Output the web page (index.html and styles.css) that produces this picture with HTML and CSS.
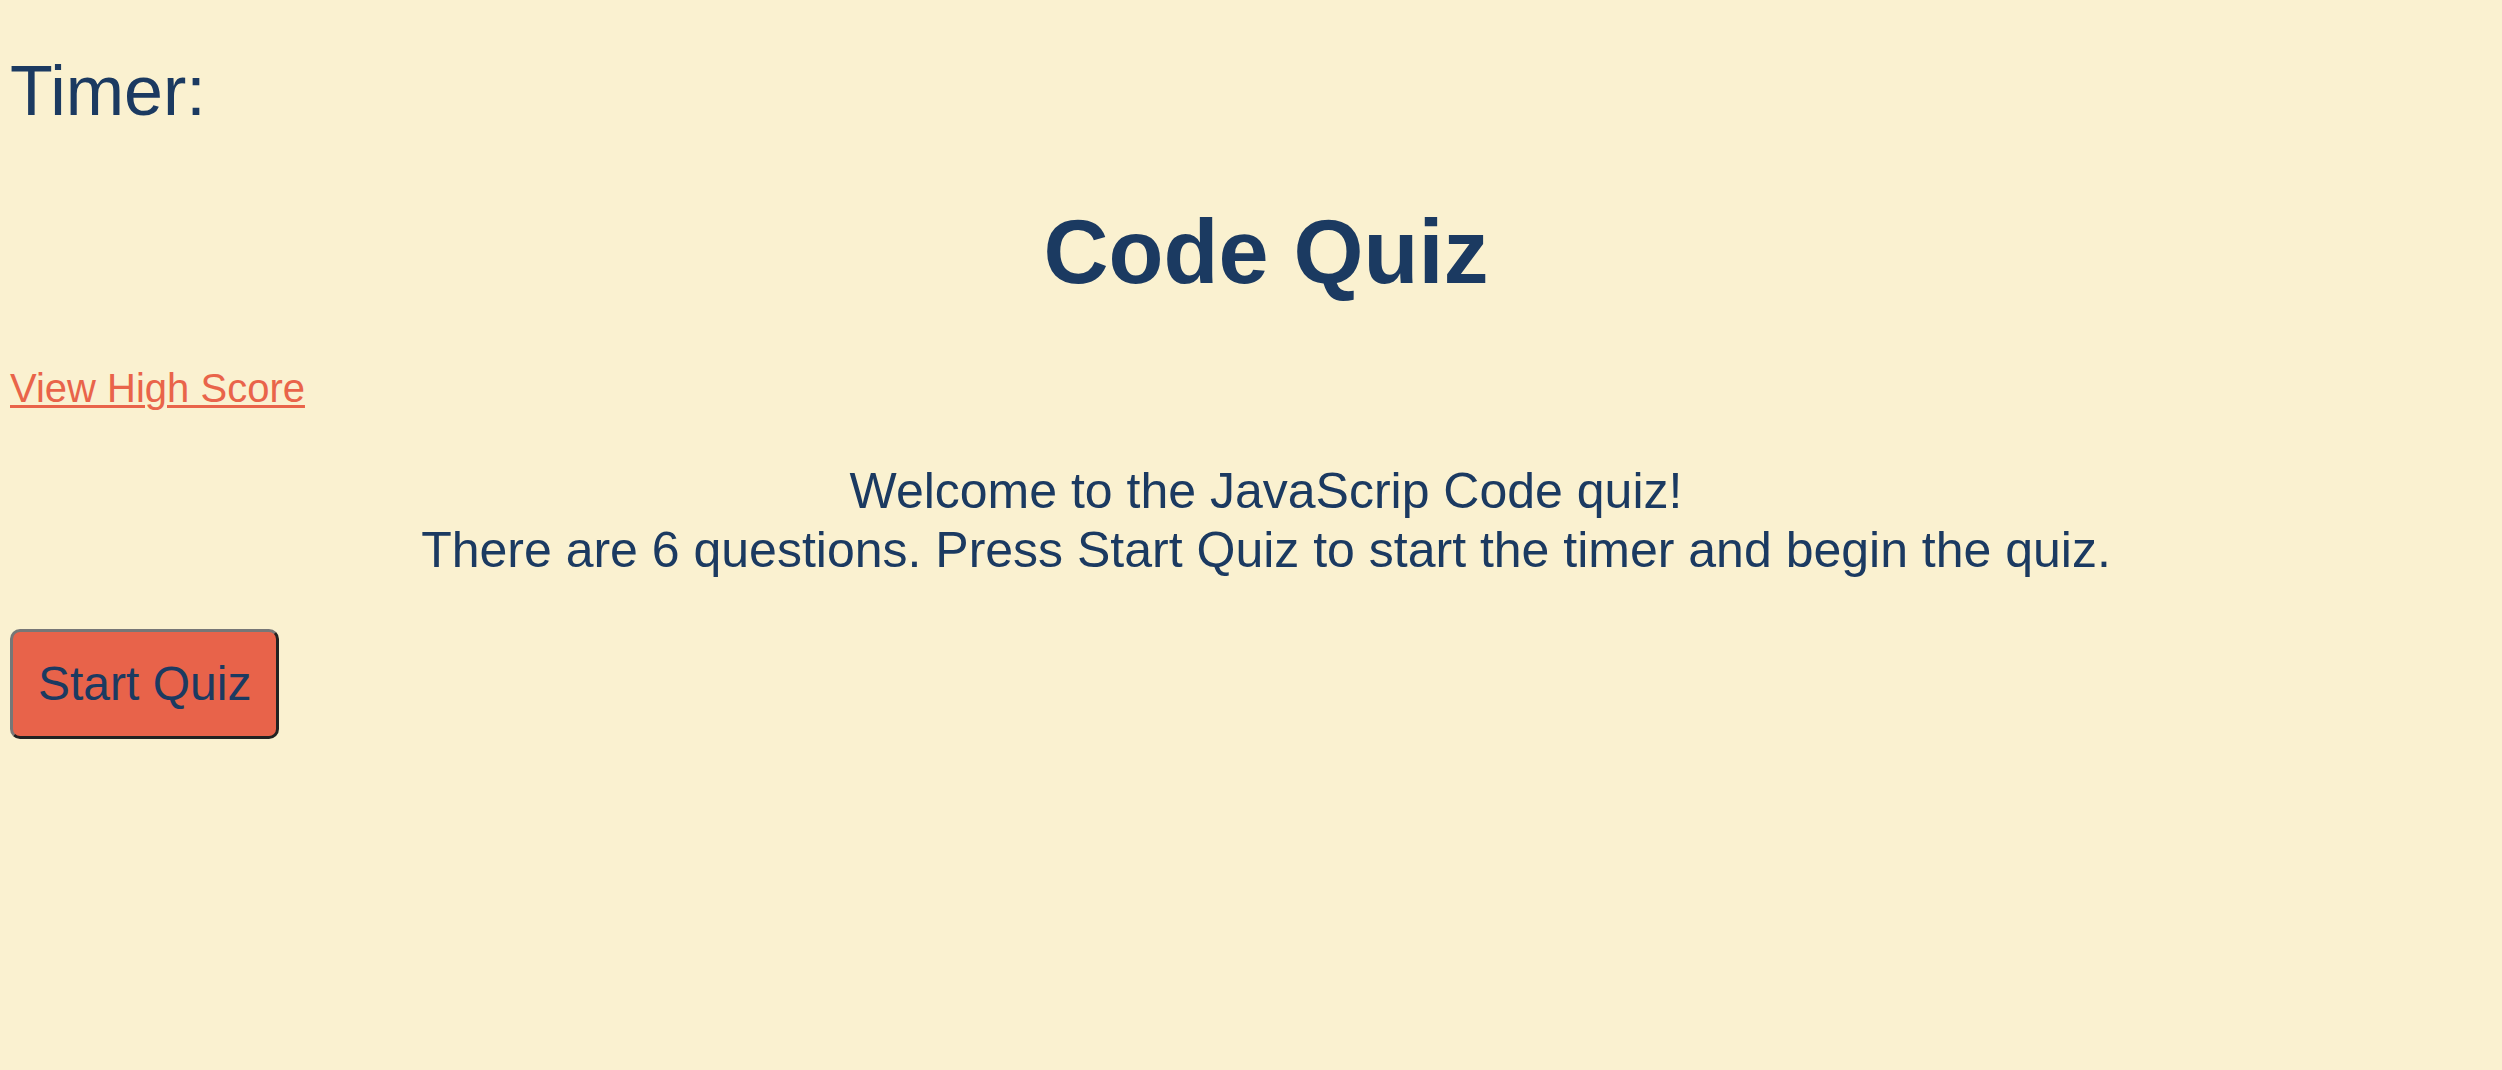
FILE: index.html
```html
<!DOCTYPE html>
<html lang="en">
<head>
<meta charset="utf-8">
<title>Code Quiz</title>
<link rel="stylesheet" href="styles.css">
</head>
<body>
<header class="top">
  <p class="timer">Timer: <span class="time"></span></p>
</header>
<main class="main">
  <h1 class="title">Code Quiz</h1>
  <div class="links"><a class="highscore" href="#">View High Score</a></div>
  <p class="intro">Welcome to the JavaScrip Code quiz!<br>There are 6 questions. Press Start Quiz to start the timer and begin the quiz.</p>
  <div class="actions"><button class="start" type="button">Start Quiz</button></div>
</main>
</body>
</html>
```

FILE: styles.css
```css
html, body {
  background: #faf1d0;
}
body {
  margin: 0;
  padding: 51px 10px 0 10px;
  font-family: "Liberation Sans", Arial, sans-serif;
  color: #1b3a61;
}
.top {
  display: flex;
}
.timer {
  margin: 0;
  font-size: 70px;
  line-height: 80px;
}
.main {
  display: flex;
  flex-direction: column;
}
.title {
  margin: 69px 0 0 30px;
  font-size: 90px;
  line-height: 104px;
  font-weight: bold;
  text-align: center;
}
.links {
  margin-top: 61px;
  font-size: 40px;
  line-height: 46px;
}
.highscore {
  color: #e9644a;
  text-decoration: underline;
  text-decoration-thickness: 3px;
  text-underline-offset: 3px;
}
.intro {
  margin: 51px 0 0 30px;
  font-size: 50px;
  line-height: 59px;
  text-align: center;
}
.actions {
  margin-top: 49px;
  display: flex;
}
.start {
  font-family: "Liberation Sans", Arial, sans-serif;
  font-size: 48px;
  line-height: 56px;
  color: #1b3a61;
  background: #e8634a;
  padding: 24px 25px;
  border: 3px solid;
  border-color: #777777 #222222 #222222 #777777;
  border-radius: 10px;
  cursor: pointer;
}
```
